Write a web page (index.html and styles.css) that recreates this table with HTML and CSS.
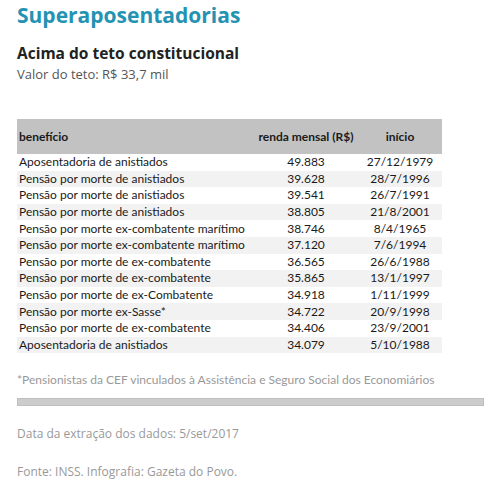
FILE: index.html
```html
<!DOCTYPE html>
<html lang="pt">
<head>
<meta charset="utf-8">
<link rel="stylesheet" href="styles.css">
</head>
<body>
<div class="page">
  <h1 class="title">Superaposentadorias</h1>
  <h2 class="subtitle">Acima do teto constitucional</h2>
  <p class="lead">Valor do teto: R$ 33,7 mil</p>

  <table class="data">
    <thead>
      <tr><th class="c1">benefício</th><th class="c2">renda mensal (R$)</th><th class="c3">início</th></tr>
    </thead>
    <tbody>
      <tr><td class="c1">Aposentadoria de anistiados</td><td class="c2">49.883</td><td class="c3">27/12/1979</td></tr>
      <tr><td class="c1">Pensão por morte de anistiados</td><td class="c2">39.628</td><td class="c3">28/7/1996</td></tr>
      <tr><td class="c1">Pensão por morte de anistiados</td><td class="c2">39.541</td><td class="c3">26/7/1991</td></tr>
      <tr><td class="c1">Pensão por morte de anistiados</td><td class="c2">38.805</td><td class="c3">21/8/2001</td></tr>
      <tr><td class="c1">Pensão por morte ex-combatente marítimo</td><td class="c2">38.746</td><td class="c3">8/4/1965</td></tr>
      <tr><td class="c1">Pensão por morte ex-combatente marítimo</td><td class="c2">37.120</td><td class="c3">7/6/1994</td></tr>
      <tr><td class="c1">Pensão por morte de ex-combatente</td><td class="c2">36.565</td><td class="c3">26/6/1988</td></tr>
      <tr><td class="c1">Pensão por morte de ex-combatente</td><td class="c2">35.865</td><td class="c3">13/1/1997</td></tr>
      <tr><td class="c1">Pensão por morte de ex-Combatente</td><td class="c2">34.918</td><td class="c3">1/11/1999</td></tr>
      <tr><td class="c1">Pensão por morte ex-Sasse*</td><td class="c2">34.722</td><td class="c3">20/9/1998</td></tr>
      <tr><td class="c1">Pensão por morte de ex-combatente</td><td class="c2">34.406</td><td class="c3">23/9/2001</td></tr>
      <tr><td class="c1">Aposentadoria de anistiados</td><td class="c2">34.079</td><td class="c3">5/10/1988</td></tr>
    </tbody>
  </table>

  <p class="note">*Pensionistas da CEF vinculados à Assistência e Seguro Social dos Economiários</p>
  <div class="bar"></div>
  <p class="meta date">Data da extração dos dados: 5/set/2017</p>
  <p class="meta source">Fonte: INSS. Infografia: Gazeta do Povo.</p>
</div>
</body>
</html>
```

FILE: styles.css
```css
html, body {
  margin: 0;
  padding: 0;
  background: #ffffff;
}

.page {
  padding: 2px 16px 0 17px;
  font-family: "Open Sans", "Noto Sans", sans-serif;
}

.title {
  margin: 0;
  font-size: 21px;
  line-height: 26px;
  font-weight: 700;
  color: #2493b3;
}

.subtitle {
  margin: 14px 0 0;
  font-size: 15.5px;
  line-height: 22px;
  font-weight: 700;
  color: #222222;
}

.lead {
  margin: 2px 0 0;
  font-size: 13px;
  line-height: 17px;
  color: #555555;
}

.data {
  margin-top: 36px;
  width: 425px;
  border-collapse: collapse;
  font-family: "Lato", "Liberation Sans", sans-serif;
  font-size: 12px;
  color: #1a1a1a;
}

.data th {
  background: #c2c2c2;
  height: 35px;
  padding: 0 2px;
  font-weight: 700;
  font-size: 12px;
  color: #1a1a1a;
}

.data td {
  height: 16.6px;
  padding: 0 2px;
  line-height: 14px;
}

.data tbody tr:nth-child(even) td {
  background: #f2f2f2;
}

.data .c1 { text-align: left; width: 233px; }
.data .c2 { text-align: center; width: 100px; }
.data .c3 { text-align: center; }

.note {
  margin: 19px 0 0;
  font-family: "Lato", "Liberation Sans", sans-serif;
  font-size: 12px;
  line-height: 16px;
  color: #999999;
}

.bar {
  margin-top: 10px;
  height: 8px;
  background: #cccccc;
  box-sizing: border-box;
  border: 1px solid #bfbfbf;
}

.meta {
  margin: 0;
  font-size: 12px;
  line-height: 16px;
  color: #999999;
}

.date { margin-top: 20px; }
.source { margin-top: 22px; }
```
